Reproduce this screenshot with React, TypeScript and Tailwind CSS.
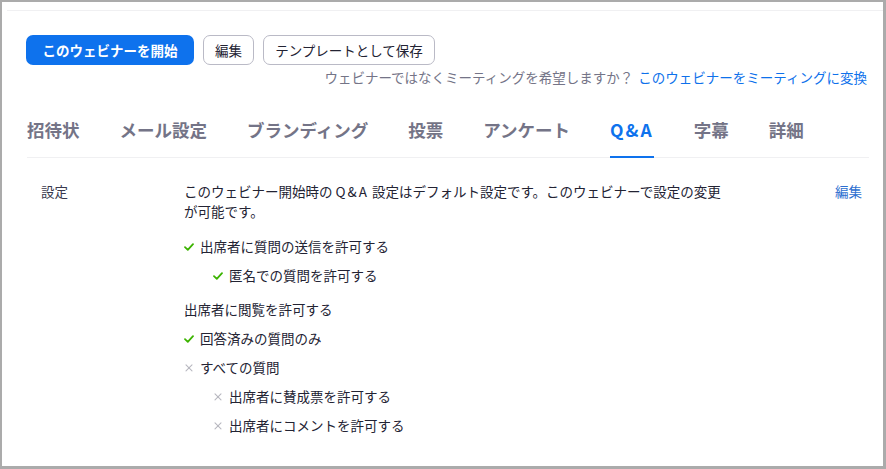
const font = { fontFamily: '"Noto Sans CJK JP", "Noto Sans", sans-serif' }

const tabs = ['招待状', 'メール設定', 'ブランディング', '投票', 'アンケート', 'Q&A', '字幕', '詳細']

function Check() {
  return (
    <svg width="10" height="8" viewBox="0 0 10 8" className="shrink-0">
      <polyline points="1,4.2 3.8,6.8 9,1.2" fill="none" stroke="#3cb300" strokeWidth="1.8" strokeLinecap="round" strokeLinejoin="round" />
    </svg>
  )
}

function Cross() {
  return (
    <svg width="10" height="8" viewBox="0 0 10 8" className="shrink-0">
      <path d="M2 0.8 L8 6.8 M8 0.8 L2 6.8" stroke="#b8b8c0" strokeWidth="1.1" strokeLinecap="round" />
    </svg>
  )
}

function Item({ icon, indent, children }: { icon?: 'check' | 'cross'; indent?: boolean; children: React.ReactNode }) {
  return (
    <div className={`flex h-5 items-center gap-[6px] ${indent ? 'pl-[29px]' : ''}`}>
      {icon === 'check' && <Check />}
      {icon === 'cross' && <Cross />}
      <span>{children}</span>
    </div>
  )
}

export default function App() {
  return (
    <div
      style={font}
      className="h-[469px] w-[886px] overflow-hidden border-b-[3px] border-l-2 border-r-[3px] border-t-2 border-[#ababab] bg-white text-[#232333]"
    >
      <div className="ml-[5px] mt-[8px] border-t border-[#f0f0f2] pl-[19px] pr-[14px]">
        <div className="mt-[24px] flex gap-[9px] text-[13.5px]">
          <button className="flex h-[30px] w-[168px] items-center justify-center rounded-[7px] bg-[#0e72ed] font-semibold text-white">
            このウェビナーを開始
          </button>
          <button className="flex h-[30px] w-[51px] items-center justify-center rounded-[7px] border border-[#babac6] bg-white">
            編集
          </button>
          <button className="flex h-[30px] w-[172px] items-center justify-center rounded-[7px] border border-[#babac6] bg-white">
            テンプレートとして保存
          </button>
        </div>

        <div className="mt-[3px] flex h-[18px] items-center justify-end pr-[2px] text-[13.5px] leading-[18px]">
          <span className="text-[#747487]">ウェビナーではなくミーティングを希望しますか？</span>
          <a className="ml-[5px] text-[#0e71eb]">このウェビナーをミーティングに変換</a>
        </div>

        <div className="ml-[1px] mt-[32px] flex gap-[40px] border-b border-[#f0f0f2] text-[17.5px] font-bold leading-[24px]">
          {tabs.map(t => (
            <div
              key={t}
              className={`-mb-px border-b-2 pb-[14px] ${
                t === 'Q&A' ? 'border-[#0e72ed] tracking-[2px] text-[#0e72ed]' : 'border-transparent text-[#747487]'
              }`}
            >
              {t}
            </div>
          ))}
        </div>

        <div className="mt-[24px] flex text-[13.5px] leading-[19.5px]">
          <div className="w-[158px] shrink-0 pl-[15px] text-[#39394d]">設定</div>
          <div className="w-[545px] shrink-0">
            <p>
              このウェビナー開始時の <span className="tracking-[2px]">Q&amp;A</span> 設定はデフォルト設定です。このウェビナーで設定の変更が可能です。
            </p>
            <div className="mt-[16px] flex flex-col gap-[9px]">
              <Item icon="check">出席者に質問の送信を許可する</Item>
              <Item icon="check" indent>匿名での質問を許可する</Item>
            </div>
            <div className="mt-[14px] flex flex-col gap-[9px]">
              <Item>出席者に閲覧を許可する</Item>
              <Item icon="check">回答済みの質問のみ</Item>
              <Item icon="cross">すべての質問</Item>
              <Item icon="cross" indent>出席者に賛成票を許可する</Item>
              <Item icon="cross" indent>出席者にコメントを許可する</Item>
            </div>
          </div>
          <div className="flex-1 text-right">
            <a className="mr-[7px] text-[#2d6fd0]">編集</a>
          </div>
        </div>
      </div>
    </div>
  )
}
